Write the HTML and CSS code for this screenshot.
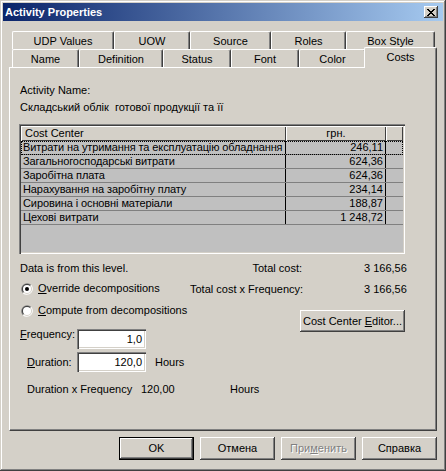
FILE: index.html
```html
<!DOCTYPE html>
<html>
<head>
<meta charset="utf-8">
<title>Activity Properties</title>
<link rel="stylesheet" href="styles.css">
</head>
<body>
<div class="window">
  <div class="titlebar">
    <span class="title">Activity Properties</span>
    <span class="close">
      <svg width="8" height="7" viewBox="0 0 8 7" shape-rendering="crispEdges">
        <rect x="0" y="0" width="2" height="1"/><rect x="6" y="0" width="2" height="1"/>
        <rect x="1" y="1" width="2" height="1"/><rect x="5" y="1" width="2" height="1"/>
        <rect x="2" y="2" width="4" height="1"/>
        <rect x="3" y="3" width="2" height="1"/>
        <rect x="2" y="4" width="4" height="1"/>
        <rect x="1" y="5" width="2" height="1"/><rect x="5" y="5" width="2" height="1"/>
        <rect x="0" y="6" width="2" height="1"/><rect x="6" y="6" width="2" height="1"/>
      </svg>
    </span>
  </div>
  <div class="client">
    <div class="tabrow">
      <div class="tab t-udp">UDP Values</div>
      <div class="tab t-uow">UOW</div>
      <div class="tab t-src">Source</div>
      <div class="tab t-roles">Roles</div>
      <div class="tab t-box">Box Style</div>
    </div>
    <div class="tabrow">
      <div class="tab t-name">Name</div>
      <div class="tab t-def">Definition</div>
      <div class="tab t-status">Status</div>
      <div class="tab t-font">Font</div>
      <div class="tab t-color">Color</div>
      <div class="tab t-costs sel">Costs</div>
    </div>
    <div class="panel">
      <div class="line">Activity Name:</div>
      <div class="line actname">Складський облік&nbsp; готової продукції та її</div>

      <div class="grid">
        <div class="ghead">
          <div class="hcell c1 hleft">Cost Center</div>
          <div class="hcell c2 hcenter">грн.</div>
          <div class="hcell c3"></div>
        </div>
        <div class="grow focus">
          <div class="cell c1">Витрати на утримання та експлуатацію обладнання</div>
          <div class="cell c2 num">246,11</div>
          <div class="cell c3"></div>
        </div>
        <div class="grow">
          <div class="cell c1">Загальногосподарські витрати</div>
          <div class="cell c2 num">624,36</div>
          <div class="cell c3"></div>
        </div>
        <div class="grow">
          <div class="cell c1">Заробітна плата</div>
          <div class="cell c2 num">624,36</div>
          <div class="cell c3"></div>
        </div>
        <div class="grow">
          <div class="cell c1">Нарахування на заробітну плату</div>
          <div class="cell c2 num">234,14</div>
          <div class="cell c3"></div>
        </div>
        <div class="grow">
          <div class="cell c1">Сировина і основні матеріали</div>
          <div class="cell c2 num">188,87</div>
          <div class="cell c3"></div>
        </div>
        <div class="grow">
          <div class="cell c1">Цехові витрати</div>
          <div class="cell c2 num">1 248,72</div>
          <div class="cell c3"></div>
        </div>
      </div>

      <div class="lower">
        <div class="lcol">
          <div class="line">Data is from this level.</div>
          <div class="radio r1">
            <svg width="12" height="12" viewBox="0 0 12 12">
              <path d="M1.76 10.24 A6 6 0 0 1 10.24 1.76 Z" fill="#808080"/>
              <path d="M10.24 1.76 A6 6 0 0 1 1.76 10.24 Z" fill="#ffffff"/>
              <path d="M2.46 9.54 A5 5 0 0 1 9.54 2.46 Z" fill="#404040"/>
              <path d="M9.54 2.46 A5 5 0 0 1 2.46 9.54 Z" fill="#d4d0c8"/>
              <circle cx="6" cy="6" r="4" fill="#ffffff"/>
              <circle cx="6" cy="6" r="2" fill="#000000"/>
            </svg>
            <span><u>O</u>verride decompositions</span>
          </div>
          <div class="radio r2">
            <svg width="12" height="12" viewBox="0 0 12 12">
              <path d="M1.76 10.24 A6 6 0 0 1 10.24 1.76 Z" fill="#808080"/>
              <path d="M10.24 1.76 A6 6 0 0 1 1.76 10.24 Z" fill="#ffffff"/>
              <path d="M2.46 9.54 A5 5 0 0 1 9.54 2.46 Z" fill="#404040"/>
              <path d="M9.54 2.46 A5 5 0 0 1 2.46 9.54 Z" fill="#d4d0c8"/>
              <circle cx="6" cy="6" r="4" fill="#ffffff"/>
            </svg>
            <span><u>C</u>ompute from decompositions</span>
          </div>
          <div class="field f1">
            <span class="flabel"><u>F</u>requency:</span>
            <div class="input">1,0</div>
          </div>
          <div class="field f2">
            <span class="flabel ind"><u>D</u>uration:</span>
            <div class="input">120,0</div>
            <span class="unit">Hours</span>
          </div>
        </div>
        <div class="rcol">
          <div class="totals">
            <span class="tl">Total cost:</span><span class="tv">3 166,56</span>
            <span class="tl">Total cost x Frequency:</span><span class="tv">3 166,56</span>
          </div>
          <button class="btn editor"><span>Cost Center <u>E</u>ditor...</span></button>
        </div>
      </div>
      <div class="dxf line">
        <span class="dx1">Duration x Frequency</span><span class="dx2">120,00</span><span>Hours</span>
      </div>
    </div>
    <div class="buttons">
      <button class="btn def"><span>OK</span></button>
      <button class="btn"><span>Отмена</span></button>
      <button class="btn dis"><span>При<u>м</u>енить</span></button>
      <button class="btn"><span>Справка</span></button>
    </div>
  </div>
</div>
</body>
</html>
```
FILE: styles.css
```css
html, body {
  margin: 0;
  padding: 0;
  background: #d4d0c8;
}
body {
  font-family: "Liberation Sans", Arial, sans-serif;
  font-size: 11px;
  color: #000;
}
.window {
  width: 446px;
  height: 471px;
  box-sizing: border-box;
  padding: 3px;
  background: #d4d0c8;
  box-shadow: inset -1px -1px #404040, inset 1px 1px #d4d0c8, inset -2px -2px #808080, inset 2px 2px #ffffff;
}
.titlebar {
  height: 18px;
  display: flex;
  align-items: center;
  background: linear-gradient(to right, #0a246a, #a6caf0);
  color: #fff;
  font-weight: bold;
  padding-left: 2px;
}
.title {
  flex: 1;
  line-height: 13px;
}
.close {
  width: 14px;
  height: 12px;
  margin-right: 5px;
  box-sizing: border-box;
  background: #d4d0c8;
  box-shadow: inset -1px -1px #404040, inset 1px 1px #ffffff, inset -2px -2px #808080;
  display: flex;
  align-items: center;
  justify-content: center;
}
.close svg {
  display: block;
  fill: #000;
  margin-left: -1px;
}
.client {
  padding: 10px 6px 0;
}
.tabrow {
  display: flex;
  height: 18px;
  margin: 0 2px 0 3px;
  align-items: flex-end;
}
.tab {
  box-sizing: border-box;
  height: 18px;
  border-top: 1px solid #fff;
  border-left: 1px solid #fff;
  border-right: 1px solid #404040;
  box-shadow: inset -1px 0 #808080;
  border-radius: 2px 2px 0 0;
  text-align: center;
  line-height: 16px;
  padding-top: 1px;
  white-space: nowrap;
  background: #d4d0c8;
}
.t-udp { width: 102px; }
.t-uow { width: 76px; }
.t-src { width: 81px; }
.t-roles { width: 75px; }
.t-box { width: 89px; }
.t-name { width: 67px; }
.t-def { width: 84px; }
.t-status { width: 68px; }
.t-font { width: 68px; }
.t-color { width: 67px; }
.t-costs { width: 69px; }
.tab.sel {
  width: 73px;
  height: 21px;
  margin: 0 -2px -1px -2px;
  position: relative;
  z-index: 1;
}
.panel {
  height: 364px;
  box-sizing: border-box;
  border-top: 1px solid #fff;
  border-left: 1px solid #fff;
  border-right: 1px solid #404040;
  border-bottom: 1px solid #404040;
  box-shadow: inset -1px -1px #808080;
  padding: 16px 10px 0 10px;
}
.line {
  line-height: 13px;
  height: 13px;
  white-space: nowrap;
}
.actname {
  margin-top: 4px;
}
.grid {
  margin-top: 10px;
  margin-left: -1px;
  width: 386px;
  height: 130px;
  box-sizing: border-box;
  padding: 2px;
  background: #c0c0c0;
  box-shadow: inset 1px 1px #808080, inset 2px 2px #404040, inset -1px -1px #ffffff, inset -2px -2px #d4d0c8;
}
.ghead {
  display: flex;
  height: 15px;
}
.hcell {
  box-sizing: border-box;
  height: 15px;
  background: #d4d0c8;
  box-shadow: inset 1px 1px #ffffff, inset -1px -1px #404040;
  line-height: 14px;
  white-space: nowrap;
}
.hleft { padding-left: 4px; }
.hcenter { text-align: center; }
.c1 { width: 265px; }
.c2 { width: 100px; }
.c3 { flex: 1; }
.grow {
  display: flex;
  height: 14px;
  box-sizing: border-box;
  border-bottom: 1px solid #808080;
}
.grow.focus {
  outline: 1px dotted #000;
  outline-offset: -1px;
}
.cell {
  box-sizing: border-box;
  line-height: 13px;
  white-space: nowrap;
  overflow: hidden;
}
.cell.c1 {
  padding-left: 2px;
  letter-spacing: -0.1px;
  border-right: 1px solid #000;
}
.cell.c2 {
  border-right: 1px solid #000;
}
.num {
  text-align: right;
  padding-right: 2px;
}
.lower {
  margin-top: 8px;
  display: flex;
}
.lcol {
  width: 170px;
  white-space: nowrap;
}
.radio {
  display: flex;
  align-items: center;
  height: 13px;
  line-height: 13px;
}
.radio svg {
  display: block;
  margin-left: 1px;
  margin-right: 5px;
}
.r1 { margin-top: 7px; }
.r2 { margin-top: 9px; }
.field {
  display: flex;
  align-items: center;
  height: 20px;
}
.f1 { margin-top: 12px; }
.f2 { margin-top: 3px; }
.flabel {
  width: 57px;
  line-height: 13px;
  box-sizing: border-box;
}
.f1 .flabel {
  align-self: flex-start;
  margin-top: -1px;
}
.flabel.ind {
  padding-left: 7px;
}
.input {
  width: 69px;
  height: 20px;
  box-sizing: border-box;
  background: #fff;
  box-shadow: inset 1px 1px #808080, inset 2px 2px #404040, inset -1px -1px #ffffff, inset -2px -2px #d4d0c8;
  text-align: right;
  padding-right: 4px;
  line-height: 20px;
}
.unit {
  margin-left: 9px;
  line-height: 13px;
}
.rcol {
  flex: 1;
}
.totals {
  display: grid;
  grid-template-columns: 112px auto;
  column-gap: 62px;
  row-gap: 8px;
  line-height: 13px;
  white-space: nowrap;
}
.tl {
  text-align: right;
}
.btn {
  font-family: inherit;
  font-size: 11px;
  color: #000;
  border: 0;
  padding: 0;
  margin: 0;
  width: 75px;
  height: 23px;
  box-sizing: border-box;
  background: #d4d0c8;
  box-shadow: inset -1px -1px #404040, inset 1px 1px #ffffff, inset -2px -2px #808080;
  display: flex;
  align-items: center;
  justify-content: center;
  line-height: 13px;
  white-space: nowrap;
}
.btn.def {
  border: 1px solid #000;
}
.btn.dis {
  color: #808080;
  text-shadow: 1px 1px #ffffff;
}
.editor {
  width: 105px;
  height: 22px;
  margin-top: 14px;
  margin-left: 110px;
}
.dxf {
  margin-top: 11px;
  display: flex;
}
.dx1 {
  width: 121px;
  padding-left: 7px;
  box-sizing: border-box;
}
.dx2 {
  width: 89px;
}
.buttons {
  display: flex;
  justify-content: flex-end;
  gap: 6px;
  margin-top: 6px;
}
```
